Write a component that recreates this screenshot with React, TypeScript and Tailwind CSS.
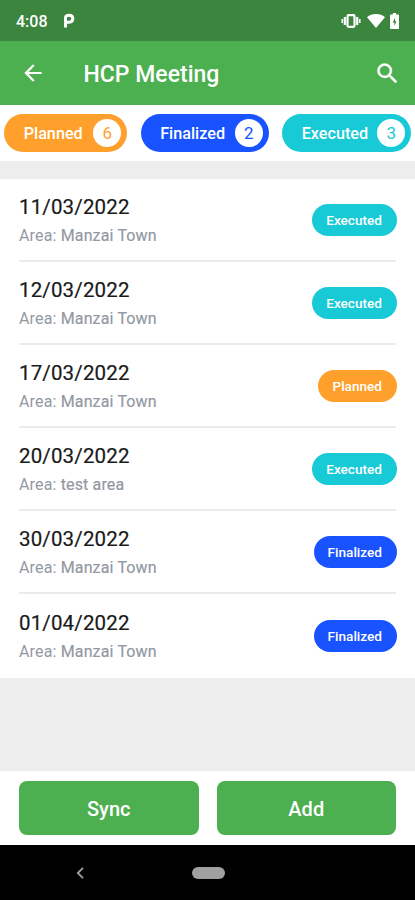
import clsx from "clsx"

type Status = "Planned" | "Finalized" | "Executed"

const statusColors: Record<Status, { bg: string; text: string }> = {
  Planned: { bg: "bg-[#ff9f2c]", text: "text-[#ff9f2c]" },
  Finalized: { bg: "bg-[#1853ff]", text: "text-[#1853ff]" },
  Executed: { bg: "bg-[#18c9d6]", text: "text-[#18c9d6]" },
}

const filters: { status: Status; count: number; width: string }[] = [
  { status: "Planned", count: 6, width: "w-[123px]" },
  { status: "Finalized", count: 2, width: "w-[128px]" },
  { status: "Executed", count: 3, width: "w-[129px]" },
]

const meetings: { date: string; area: string; status: Status }[] = [
  { date: "11/03/2022", area: "Manzai Town", status: "Executed" },
  { date: "12/03/2022", area: "Manzai Town", status: "Executed" },
  { date: "17/03/2022", area: "Manzai Town", status: "Planned" },
  { date: "20/03/2022", area: "test area", status: "Executed" },
  { date: "30/03/2022", area: "Manzai Town", status: "Finalized" },
  { date: "01/04/2022", area: "Manzai Town", status: "Finalized" },
]

function StatusBar() {
  return (
    <div className="flex h-[41px] shrink-0 items-center bg-[#3b853e] pl-4 pr-[16px] text-white">
      <span className="pt-0.5 text-[16px] leading-5 font-medium">4:08</span>
      <svg className="ml-[15px] h-[15px] w-3" viewBox="0 0 12 15" fill="none">
        <path d="M2.500 14.500V10" stroke="currentColor" strokeWidth="3" />
        <path d="M2.500 8.500V4.600C2.700 3 4 2.200 6.100 2.200c2.300 0 3.700 1.300 3.700 3.400S8.400 9.200 6.100 9.200H1.200" stroke="currentColor" strokeWidth="3" />
      </svg>

      <div className="ml-auto flex items-center">
        {/* Vibrate */}
        <svg className="h-4 w-5" viewBox="0 0 20 16" fill="none" stroke="currentColor">
          <rect x="6.500" y="2.200" width="7" height="11.600" rx="1" strokeWidth="2.200" />
          <path d="M3.800 4v8M16.200 4v8" strokeWidth="2.200" />
          <path d="M1.200 6v4M18.800 6v4" strokeWidth="1.500" />
        </svg>
        {/* Wifi */}
        <svg className="ml-[6px] h-[14px] w-[18px]" viewBox="0 0 18 14" fill="currentColor">
          <path d="M9 14 0 3.200C2.400 1.100 5.500 0 9 0s6.600 1.100 9 3.200z" />
        </svg>
        {/* Battery */}
        <svg className="ml-[5px] h-4 w-[9px]" viewBox="0 0 10 16" preserveAspectRatio="none">
          <path d="M3.200 0h3.600v1.600H9c.6 0 1 .4 1 1V15c0 .6-.4 1-1 1H1c-.6 0-1-.4-1-1V2.600c0-.6.4-1 1-1h2.200z" fill="currentColor" />
          <path d="M5.600 4.800 3 9.500h1.900v3.400l2.300-4.600H5.600z" fill="#3b853e" />
        </svg>
      </div>
    </div>
  )
}

function AppBar() {
  return (
    <header className="flex h-16 shrink-0 items-center bg-[#4caf50] pl-[20px] pr-[14px] text-white">
      <svg className="h-[26px] w-[26px]" viewBox="0 0 24 24" fill="currentColor">
        <path d="M20 11H7.830l5.590-5.590L12 4l-8 8 8 8 1.410-1.410L7.830 13H20v-2z" />
      </svg>
      <h1 className="ml-[37.5px] pt-[3px] text-[23px] leading-7 font-medium">HCP Meeting</h1>
      <svg className="ml-auto h-[27px] w-[27px]" viewBox="0 0 24 24" fill="currentColor" stroke="currentColor" strokeWidth="0.3">
        <path d="M15.500 14h-.79l-.28-.27A6.471 6.471 0 0 0 16 9.500 6.500 6.500 0 1 0 9.500 16c1.610 0 3.090-.59 4.230-1.570l.27.28v.79l5 4.990L20.490 19l-4.990-5zm-6 0C7.010 14 5 11.990 5 9.500S7.010 5 9.500 5 14 7.010 14 9.500 11.990 14 9.500 14z" />
      </svg>
    </header>
  )
}

export default function App() {
  return (
    <div className="flex h-[900px] w-[415px] flex-col overflow-hidden bg-[#ededed] font-['Roboto',sans-serif]">
      <StatusBar />
      <AppBar />

      {/* Status filters */}
      <div className="flex h-14 shrink-0 items-center gap-[13.5px] bg-white pl-[4.2px]">
        {filters.map(({ status, count, width }) => (
          <button
            key={status}
            className={clsx("flex h-[38px] shrink-0 items-center justify-between rounded-full pr-[6px] pl-[19.5px]", width, statusColors[status].bg)}
          >
            <span className="pt-0.5 text-[16.2px] leading-5 font-medium text-white">{status}</span>
            <span className={clsx("flex size-7 items-center justify-center rounded-full bg-white pt-px text-[17px]", statusColors[status].text)}>
              {count}
            </span>
          </button>
        ))}
      </div>

      {/* Meetings */}
      <ul className="mt-[18px] h-[499px] shrink-0 bg-white px-[19px]">
        {meetings.map(({ date, area, status }) => (
          <li key={date} className="flex h-[83.1px] items-center justify-between border-b-2 border-[#ebebeb] last:border-transparent">
            <div className="pt-[4px]">
              <p className="text-[20.5px] leading-7 tracking-[0.15px] text-[#191919] [-webkit-text-stroke:0.2px]">{date}</p>
              <p className="text-[16px] leading-[29px] tracking-[0.15px] text-[#9299a3]">
                Area: <span className="[-webkit-text-stroke:0.2px]">{area}</span>
              </p>
            </div>
            <span className={clsx("-mr-px mt-px rounded-full pr-[15px] pl-[14px] text-[13.6px] leading-8 font-medium text-white", statusColors[status].bg)}>
              {status}
            </span>
          </li>
        ))}
      </ul>

      <footer className="mt-auto flex h-[74px] shrink-0 gap-[18px] bg-white px-[19px] pt-[10px] pb-[10px] text-[20px] font-medium text-white">
        <button className="flex-1 rounded-lg bg-[#4caf50] pt-px">Sync</button>
        <button className="flex-1 rounded-lg bg-[#4caf50] pt-px">Add</button>
      </footer>

      {/* System navigation */}
      <nav className="flex h-[55px] shrink-0 items-center bg-black pl-[76px]">
        <svg className="h-3 w-2" viewBox="0 0 8 12" fill="none" stroke="#a0a0a0" strokeWidth="1.800">
          <path d="M7 .8 1.800 6 7 11.200" />
        </svg>
        <div className="ml-[108px] h-3 w-[33px] rounded-full bg-[#a0a0a0]" />
      </nav>
    </div>
  )
}
